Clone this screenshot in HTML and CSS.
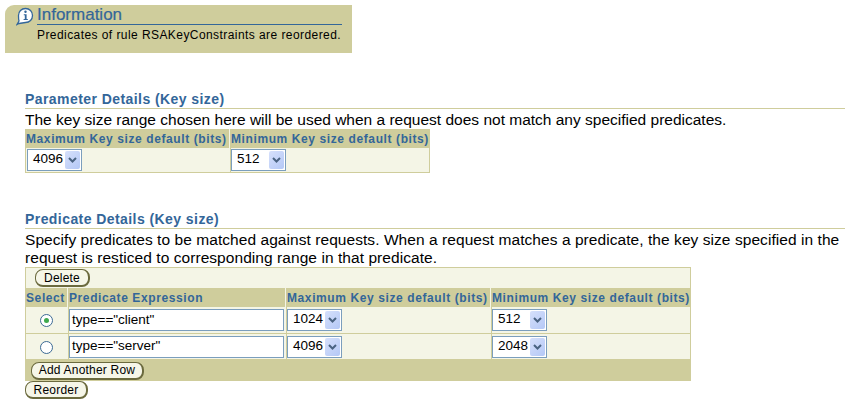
FILE: index.html
```html
<!DOCTYPE html>
<html lang="en">
<head>
<meta charset="utf-8">
<title>Key size</title>
<link rel="stylesheet" href="styles.css">
</head>
<body>
<div class="info">
  <svg class="info-icon" width="18" height="19" viewBox="0 0 18 19">
    <path d="M9.5 1.5C13.6 1.5 16.5 4.5 16.5 8.5C16.5 12.5 13.6 15.5 9.5 15.5L3 16.5L1 17.5L3 14C2.5 12.5 2.5 10 2.5 8.5C2.5 4.5 5.4 1.5 9.5 1.5Z" fill="#fff" stroke="#336699" stroke-width="1.3"/>
    <circle cx="9.5" cy="4.8" r="1.2" fill="#336699"/>
    <path d="M7.8 7.3H10.6V12H11.8V13H7.6V12H8.8V8.3H7.8Z" fill="#336699"/>
  </svg>
  <div class="info-body">
    <h1 class="info-title">Information</h1>
    <p class="info-text">Predicates of rule RSAKeyConstraints are reordered.</p>
  </div>
</div>

<section class="param">
  <h2 class="section-title">Parameter Details (Key size)</h2>
  <p class="section-text">The key size range chosen here will be used when a request does not match any specified predicates.</p>
  <table class="grid grid-param">
    <colgroup><col class="c-p1"><col class="c-p2"></colgroup>
    <tr class="head">
      <th>Maximum Key size default (bits)</th>
      <th>Minimum Key size default (bits)</th>
    </tr>
    <tr class="row">
      <td><span class="sel"><span class="sel-val">4096</span><span class="sel-btn"><svg width="9" height="6" viewBox="0 0 9 6"><path d="M1 1L4.5 4.5L8 1" fill="none" stroke="#4a6382" stroke-width="2"/></svg></span></span></td>
      <td><span class="sel"><span class="sel-val">512</span><span class="sel-btn"><svg width="9" height="6" viewBox="0 0 9 6"><path d="M1 1L4.5 4.5L8 1" fill="none" stroke="#4a6382" stroke-width="2"/></svg></span></span></td>
    </tr>
  </table>
</section>

<section class="pred">
  <h2 class="section-title">Predicate Details (Key size)</h2>
  <p class="section-text">Specify predicates to be matched against requests. When a request matches a predicate, the key size specified in the request is resticed to corresponding range in that predicate.</p>
  <table class="grid grid-pred">
    <colgroup><col class="c-select"><col class="c-expr"><col class="c-max"><col class="c-min"></colgroup>
    <tr class="tools"><td colspan="4"><button class="btn btn-delete">Delete</button></td></tr>
    <tr class="head">
      <th>Select</th>
      <th>Predicate Expression</th>
      <th>Maximum Key size default (bits)</th>
      <th>Minimum Key size default (bits)</th>
    </tr>
    <tr class="row">
      <td class="center"><span class="radio on"></span></td>
      <td><span class="field">type=="client"</span></td>
      <td><span class="sel"><span class="sel-val">1024</span><span class="sel-btn"><svg width="9" height="6" viewBox="0 0 9 6"><path d="M1 1L4.5 4.5L8 1" fill="none" stroke="#4a6382" stroke-width="2"/></svg></span></span></td>
      <td><span class="sel"><span class="sel-val">512</span><span class="sel-btn"><svg width="9" height="6" viewBox="0 0 9 6"><path d="M1 1L4.5 4.5L8 1" fill="none" stroke="#4a6382" stroke-width="2"/></svg></span></span></td>
    </tr>
    <tr class="row row-b">
      <td class="center"><span class="radio"></span></td>
      <td><span class="field">type=="server"</span></td>
      <td><span class="sel"><span class="sel-val">4096</span><span class="sel-btn"><svg width="9" height="6" viewBox="0 0 9 6"><path d="M1 1L4.5 4.5L8 1" fill="none" stroke="#4a6382" stroke-width="2"/></svg></span></span></td>
      <td><span class="sel"><span class="sel-val">2048</span><span class="sel-btn"><svg width="9" height="6" viewBox="0 0 9 6"><path d="M1 1L4.5 4.5L8 1" fill="none" stroke="#4a6382" stroke-width="2"/></svg></span></span></td>
    </tr>
    <tr class="foot"><td colspan="4"><button class="btn btn-add">Add Another Row</button></td></tr>
  </table>
  <button class="btn btn-reorder">Reorder</button>
</section>
</body>
</html>
```
FILE: styles.css
```css
* { box-sizing: border-box; }
body { margin: 0; background: #fff; color: #000; font-family: "Liberation Sans", Arial, sans-serif; font-size: 12px; }

.info { margin: 5px 0 0 5px; width: 347px; height: 48px; background: #cfcd9c; border-top-left-radius: 9px; display: flex; padding: 2px 10px 0 11px; }
.info-icon { flex: none; }
.info-body { flex: 1; margin-left: 3px; }
.info-title { margin: 0; font-size: 17px; line-height: 15px; padding-bottom: 2px; font-weight: normal; color: #336699; border-bottom: 1px solid #336699; -webkit-text-stroke: 0.2px #336699; }
.info-text { margin: 3px 0 0; font-size: 12px; line-height: 14px; letter-spacing: 0.43px; }

.param { margin: 38px 6px 0 25px; }
.pred { margin: 38px 6px 0 25px; }
.section-title { margin: 0; padding-bottom: 1px; font-size: 14px; line-height: 16px; font-weight: bold; color: #336699; border-bottom: 1px solid #cfcd9c; letter-spacing: 0.43px; }
.section-text { margin: 0; padding-top: 2px; font-size: 15.5px; line-height: 18px; }
.pred .section-text { letter-spacing: 0.06px; }

.grid { border-collapse: separate; border-spacing: 0; table-layout: fixed; background: #f4f5e6; }
.grid-param { width: 405px; }
.grid-pred { width: 666px; }
.grid th { background: #cfcd9c; color: #336699; font-size: 12px; line-height: 14px; font-weight: bold; text-align: left; padding: 2px 1px 2px 0; height: 19px; white-space: nowrap; overflow: hidden; letter-spacing: 0.6px; border-right: 1px solid #f4f5e6; border-left: 1px solid #cfcd9c; }
.grid th:last-child { border-right: 1px solid #cfcd9c; }
.grid td { padding: 0; border-bottom: 1px solid #cfcd9c; border-left: 1px solid #cfcd9c; }
.grid td:last-child { border-right: 1px solid #cfcd9c; }
.row td { height: 27px; }
.row-b td { height: 26px; }
.grid-param .row td { height: 25px; }
.grid-param td:first-child { padding-left: 1px; }
.grid .tools td { height: 21px; border-top: 1px solid #cfcd9c; border-bottom: 0; padding-left: 9px; }
.grid .foot td { height: 21px; background: #cfcd9c; border: 0; padding-left: 6px; }
.c-p1 { width: 205px; }
.c-p2 { width: 200px; }
.c-select { width: 43px; }
.c-expr { width: 218px; }
.c-max { width: 205px; }
.c-min { width: 200px; }
.grid .center { text-align: center; padding-right: 1px; }

.sel { display: inline-flex; align-items: center; vertical-align: middle; width: 55px; height: 22px; background: #fff; border: 1px solid #7b9ebd; padding: 1px; font-size: 13.5px; }
.sel-val { flex: 1; padding: 0 2px 2px 4px; line-height: 16px; }
.sel-btn { flex: none; width: 15px; height: 18px; background: linear-gradient(135deg, #d6e0fb, #b4c8f6); display: flex; align-items: center; justify-content: center; border-radius: 2px; }
.field { display: flex; align-items: center; height: 22px; width: 215px; background: #fff; border: 1px solid #7b9ebd; padding: 0 2px 2px; font-size: 13.5px; }
.radio { display: inline-block; vertical-align: middle; width: 13px; height: 13px; border-radius: 50%; background: #fff; border: 1px solid #3c6a94; position: relative; }
.radio.on::after { content: ""; position: absolute; left: 3px; top: 3px; width: 5px; height: 5px; border-radius: 50%; background: #3fa94d; }

.btn { display: inline-flex; align-items: center; justify-content: center; font-family: inherit; font-size: 12px; color: #000; background: #f6f6e8; border: 1px solid #6b6a3e; border-right-width: 2px; border-bottom-width: 2px; border-radius: 8px; padding: 0; height: 18px; letter-spacing: 0.2px; }
.btn-delete { width: 55px; }
.btn-add { width: 113px; }
.btn-reorder { width: 63px; display: flex; }
```
